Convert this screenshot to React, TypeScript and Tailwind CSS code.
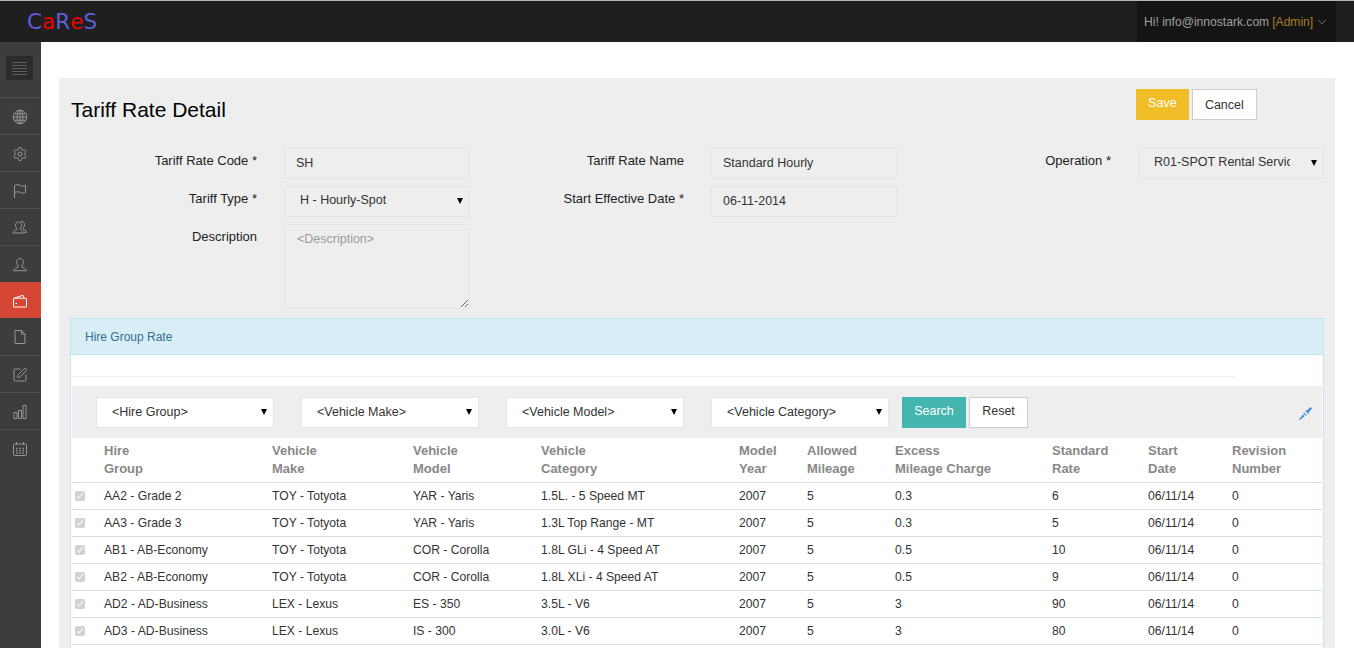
import { Settings, SquarePen, ChevronDown } from 'lucide-react'
import type { ReactNode } from 'react'

const FONT = { fontFamily: '"Liberation Sans", Arial, sans-serif' }

function Line({ children, className }: { children: ReactNode; className?: string }) {
  return (
    <svg className={className} width="16" height="16" viewBox="0 0 16 16" fill="none" stroke="currentColor" strokeWidth="1">
      {children}
    </svg>
  )
}

const GlobeIcon = () => (
  <Line>
    <circle cx="8" cy="8" r="6.8" />
    <ellipse cx="8" cy="8" rx="3" ry="6.8" />
    <path d="M8 1.2v13.6M1.2 8h13.6M2.2 4.8h11.6M2.2 11.2h11.6" />
  </Line>
)
const FlagIcon = () => (
  <Line>
    <path d="M2.5 15V2.5c2.5-1.2 4.5-.9 6 0 1.5.8 3 .9 5 0v7c-2 1-3.5.8-5 0-1.500-.9-3.500-1.100-6 0" />
  </Line>
)
const UsersIcon = () => (
  <Line>
    <path d="M6.500 2c-1.900 0-3 1.400-3 3.300 0 1.300.5 2.400 1.300 3.100v1.200c-.9.7-3.600 1.200-3.800 3.400h11c-.2-2.200-2.900-2.700-3.800-3.400V8.400c.8-.7 1.300-1.800 1.300-3.100C9.500 3.400 8.400 2 6.500 2z" />
    <path d="M8.500 1.500c2.200-.6 4 .8 4 3.300 0 1.200-.4 2.300-1.200 3v1.400c.8.6 3 1 3.200 3.300H12.500" />
  </Line>
)
const UserIcon = () => (
  <Line>
    <path d="M8 1.500c-2.100 0-3.400 1.500-3.400 3.700 0 1.400.6 2.700 1.500 3.400v1.400c-1 .8-4.300 1.300-4.600 3.700h13c-.3-2.400-3.600-2.900-4.600-3.700V8.600c.9-.7 1.500-2 1.500-3.400 0-2.200-1.300-3.700-3.400-3.700z" />
  </Line>
)
const WalletIcon = () => (
  <Line>
    <path d="M1.500 6v7.200c0 .5.300.8.800.8h11.400c.5 0 .8-.3.800-.8V6c0-.5-.3-.8-.8-.8H2.300c-.5 0-.8.300-.8.800z" />
    <path d="M1.800 5.300 11 2.300l1 2.900" />
    <path d="M3.500 10.500h1.500" />
  </Line>
)
const DocIcon = () => (
  <Line>
    <path d="M3 1.500h6.500L13 5v9.500H3z" />
    <path d="M9.500 1.500V5H13" />
  </Line>
)
const BarsIcon = () => (
  <Line>
    <path d="M2 8.500h3v6H2zM6.500 6.500h3v8h-3zM11 1.500h3v13h-3z" />
  </Line>
)
const CalendarIcon = () => (
  <Line>
    <rect x="1.500" y="3" width="13" height="11.500" rx="1" />
    <path d="M4.500 1v3M11.500 1v3" />
    <path d="M4 7.500h1.500M7.300 7.500h1.500M10.500 7.500h1.500M4 9.700h1.500M7.300 9.700h1.500M10.500 9.700h1.500M4 12h1.500M7.300 12h1.500M10.500 12h1.500" strokeWidth="1.300" />
  </Line>
)

const navItems = [
  { icon: <GlobeIcon />, cls: 'h-[37px] border-b border-[#505050] text-[#969696]' },
  { icon: <Settings className="h-[16px] w-[16px]" strokeWidth={1.5} />, cls: 'h-[37px] border-b border-[#505050] text-[#969696]' },
  { icon: <FlagIcon />, cls: 'h-[37px] border-b border-[#505050] text-[#969696]' },
  { icon: <UsersIcon />, cls: 'h-[37px] border-b border-[#505050] text-[#969696]' },
  { icon: <UserIcon />, cls: 'h-[36px] text-[#969696]' },
  { icon: <WalletIcon />, cls: 'h-[36px] bg-[#d64635] text-white' },
  { icon: <DocIcon />, cls: 'h-[38px] border-b border-[#505050] text-[#969696]' },
  { icon: <SquarePen className="h-[16px] w-[16px]" strokeWidth={1.5} />, cls: 'h-[37px] border-b border-[#505050] text-[#969696]' },
  { icon: <BarsIcon />, cls: 'h-[37px] border-b border-[#505050] text-[#969696]' },
  { icon: <CalendarIcon />, cls: 'h-[37px] text-[#969696]' },
]

const columns = [
  { first: 'Hire', second: 'Group' },
  { first: 'Vehicle', second: 'Make' },
  { first: 'Vehicle', second: 'Model' },
  { first: 'Vehicle', second: 'Category' },
  { first: 'Model', second: 'Year' },
  { first: 'Allowed', second: 'Mileage' },
  { first: 'Excess', second: 'Mileage Charge' },
  { first: 'Standard', second: 'Rate' },
  { first: 'Start', second: 'Date' },
  { first: 'Revision', second: 'Number' },
]

const rows = [
  ['AA2 - Grade 2', 'TOY - Totyota', 'YAR - Yaris', '1.5L. - 5 Speed MT', '2007', '5', '0.3', '6', '06/11/14', '0'],
  ['AA3 - Grade 3', 'TOY - Totyota', 'YAR - Yaris', '1.3L Top Range - MT', '2007', '5', '0.3', '5', '06/11/14', '0'],
  ['AB1 - AB-Economy', 'TOY - Totyota', 'COR - Corolla', '1.8L GLi - 4 Speed AT', '2007', '5', '0.5', '10', '06/11/14', '0'],
  ['AB2 - AB-Economy', 'TOY - Totyota', 'COR - Corolla', '1.8L XLi - 4 Speed AT', '2007', '5', '0.5', '9', '06/11/14', '0'],
  ['AD2 - AD-Business', 'LEX - Lexus', 'ES - 350', '3.5L - V6', '2007', '5', '3', '90', '06/11/14', '0'],
  ['AD3 - AD-Business', 'LEX - Lexus', 'IS - 300', '3.0L - V6', '2007', '5', '3', '80', '06/11/14', '0'],
]

const formInput = 'h-[31px] w-[186px] border border-[#e5e5e5] bg-[#eeeeee] px-[11px] pb-[2px] text-[12.5px] text-[#333333] outline-none'

function SelectBox({ label, className }: { label: string; className: string }) {
  return (
    <div className="relative h-[31px]">
      <select className={`h-[31px] appearance-none border border-[#e5e5e5] pl-[15px] pr-[33px] text-[12.5px] text-[#333333] outline-none ${className}`} defaultValue={label}>
        <option>{label}</option>
      </select>
      <svg className="absolute right-[7px] top-[12px] text-black" width="6" height="6" viewBox="0 0 6 6" fill="currentColor">
        <path d="M0 0h6L3 6z" />
      </svg>
    </div>
  )
}

export default function App() {
  return (
    <div className="flex h-screen flex-col overflow-hidden bg-white" style={FONT}>
      {/* Top bar */}
      <header className="flex h-[42px] shrink-0 items-stretch border-t border-[#b5b5b5] bg-[#1f1f1f]">
        <div className="flex items-center pl-[27px] pt-px text-[21.500px] text-[#5c60d6]" style={{ fontFamily: '"DejaVu Sans", sans-serif' }}>
          C<span className="text-[#f00000]">a</span>R<span className="text-[#f00000]">e</span>S
        </div>
        <div className="ml-auto mr-[18px] flex w-[199px] items-center bg-[#141414] pl-[7px] pt-px text-[12.100px] text-[#a0a0a0]">
          <span>Hi! info@innostark.com</span>
          <span className="ml-[3px] text-[#a57f22]">[Admin]</span>
          <ChevronDown className="ml-[2px] h-[14px] w-[14px]" strokeWidth={1.2} />
        </div>
      </header>

      <div className="flex min-h-0 flex-1">
        {/* Sidebar */}
        <aside className="w-[41px] shrink-0 bg-[#3d3d3d]">
          <div className="flex h-[56px] border-b border-[#505050] pl-[6px] pt-[14px]">
            <div className="flex h-[24px] w-[27px] flex-col items-center justify-center gap-[2px] bg-[#2c2c2c]">
              <span className="h-px w-[15px] bg-[#5e5e5e]" />
              <span className="h-px w-[15px] bg-[#5e5e5e]" />
              <span className="h-px w-[15px] bg-[#5e5e5e]" />
              <span className="h-px w-[15px] bg-[#5e5e5e]" />
              <span className="h-px w-[15px] bg-[#5e5e5e]" />
            </div>
          </div>
          {navItems.map((item, i) => (
            <div key={i} className={`flex items-center justify-center pr-[2px] pt-px ${item.cls}`}>
              {item.icon}
            </div>
          ))}
        </aside>

        {/* Content */}
        <main className="min-w-0 flex-1 pl-[18px] pr-[19px] pt-[36px]">
          <div className="h-full bg-[#eeeeee] pl-[11px] pr-[11px]">
            <div className="flex h-[70px]">
              <h1 className="pl-px pt-[19px] text-[21px] leading-[26px] text-black">Tariff Rate Detail</h1>
              <div className="ml-[910px] flex gap-[3px] pt-[11px]">
                <button className="h-[31px] w-[53px] bg-[#f0bd28] pb-[2px] text-[12.500px] text-white">Save</button>
                <button className="h-[31px] w-[65px] border border-[#cccccc] bg-white pt-px text-[12.500px] text-[#333333]">Cancel</button>
              </div>
            </div>

            {/* Form */}
            <div className="grid grid-cols-[187px_186px_187px_186px_187px_186px] gap-x-[27px] gap-y-[7px] text-[13px] text-[#222222]">
              <label className="pt-[3px] text-right">Tariff Rate Code *</label>
              <input className={formInput} defaultValue="SH" />
              <label className="pt-[3px] text-right">Tariff Rate Name</label>
              <input className={formInput} defaultValue="Standard Hourly" />
              <label className="pt-[3px] text-right">Operation *</label>
              <SelectBox label="R01-SPOT Rental Service" className="w-[186px] bg-[#eeeeee] pb-[2px]" />

              <label className="pt-[3px] text-right">Tariff Type *</label>
              <SelectBox label="H - Hourly-Spot" className="w-[186px] bg-[#eeeeee] pb-[2px]" />
              <label className="pt-[3px] text-right">Start Effective Date *</label>
              <input className={formInput} defaultValue="06-11-2014" />
              <div className="col-span-2" />

              <label className="pt-[3px] text-right">Description</label>
              <textarea className="h-[85px] w-[186px] border border-[#e5e5e5] bg-[#eeeeee] px-[12px] py-[5px] text-[12.500px] text-[#333333] outline-none placeholder:text-[#999999]" placeholder="<Description>" />
            </div>

            {/* Hire group rate */}
            <section className="mt-[9px] min-h-[400px] border border-[#bce8f1] bg-white">
              <div className="flex h-[36px] items-center border-b border-[#bce8f1] bg-[#d9edf7] pl-[14px] text-[12px] text-[#31708f]">
                Hire Group Rate
              </div>
              <div className="px-px">
                <div className="h-[22px] w-[1163px] border-b border-[#eeeeee]" />
                <div className="mt-[9px] flex h-[52px] items-center bg-[#eeeeee] pl-[24px] pr-[10px]">
                  <div className="flex gap-[27px]">
                    <SelectBox label="<Hire Group>" className="w-[178px] bg-white" />
                    <SelectBox label="<Vehicle Make>" className="w-[178px] bg-white" />
                    <SelectBox label="<Vehicle Model>" className="w-[178px] bg-white" />
                    <SelectBox label="<Vehicle Category>" className="w-[178px] bg-white" />
                  </div>
                  <button className="ml-[13px] h-[31px] w-[64px] bg-[#45b6af] pb-px text-[12.500px] text-white">Search</button>
                  <button className="ml-[3px] h-[31px] w-[59px] border border-[#cccccc] bg-white pb-px text-[12.500px] text-[#333333]">Reset</button>
                  <svg className="ml-auto mt-[2px] text-[#3f8bd8]" width="13" height="13" viewBox="0 0 13 13" fill="currentColor">
                    <path d="M0 12.200 4.200 7.500 5.800 9 .8 13z" />
                    <path d="M4.500 6.500 6.500 8.500 8 8.300 4.800 5.200z" />
                    <path d="M7 4.500 8.800 6.500 13 1.500 11.500 0z" />
                    <path d="M6 3.800 9.500 7l.2-1.400L7.400 3.600z" />
                  </svg>
                </div>
                <table className="w-[1250px] table-fixed border-collapse text-left text-[12.150px] text-[#333333]">
                  <colgroup>
                    <col className="w-[24px]" />
                    <col className="w-[168px]" />
                    <col className="w-[141px]" />
                    <col className="w-[128px]" />
                    <col className="w-[198px]" />
                    <col className="w-[68px]" />
                    <col className="w-[88px]" />
                    <col className="w-[157px]" />
                    <col className="w-[96px]" />
                    <col className="w-[84px]" />
                    <col className="w-[98px]" />
                  </colgroup>
                  <thead>
                    <tr className="h-[44px] border-b border-[#dddddd]">
                      <th />
                      {columns.map((col, i) => (
                        <th key={i} className="px-[8px] pt-px align-middle text-[13px] font-bold leading-[18px] text-[#888888]">
                          {col.first}
                          <br />
                          {col.second}
                        </th>
                      ))}
                      <th />
                    </tr>
                  </thead>
                  <tbody>
                    {rows.map((row, i) => (
                      <tr key={i} className="h-[27px] border-b border-[#dddddd]">
                        <td className="pl-[3px]">
                          <input type="checkbox" checked disabled readOnly className="block h-[10px] w-[10px]" />
                        </td>
                        {row.map((cell, j) => (
                          <td key={j} className="px-[8px] pt-[2px]">{cell}</td>
                        ))}
                        <td />
                      </tr>
                    ))}
                  </tbody>
                </table>
              </div>
            </section>
          </div>
        </main>
      </div>
    </div>
  )
}
